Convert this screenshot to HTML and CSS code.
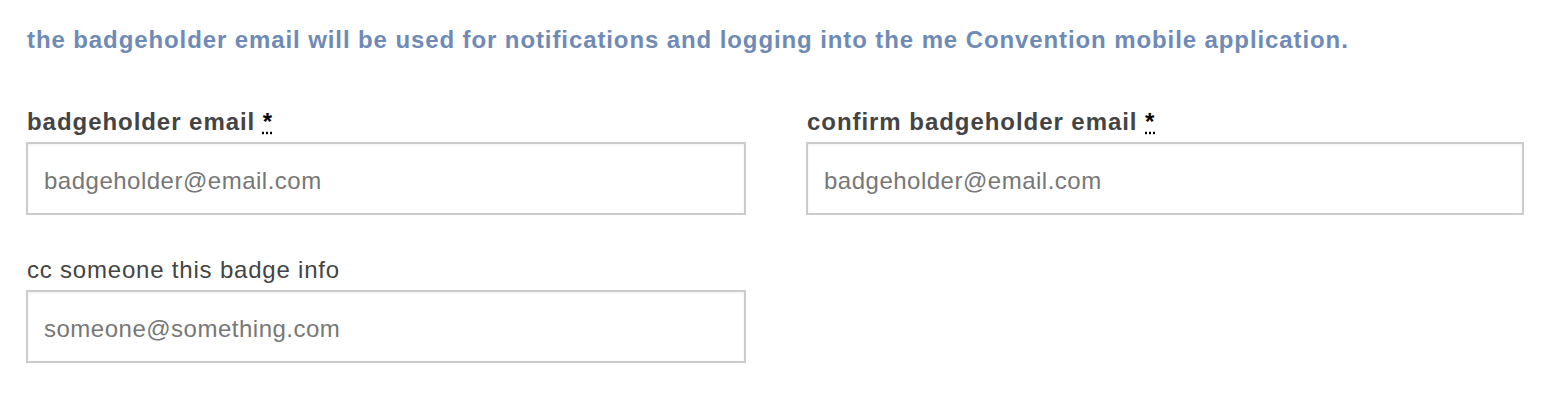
FILE: index.html
```html
<!DOCTYPE html>
<html lang="en">
<head>
    <meta charset="UTF-8">
    <meta name="viewport" content="width=device-width, initial-scale=1.0">
    <title>Badgeholder</title>
    <link rel="stylesheet" href="styles.css">
</head>
<body>
    <div class="form">
        <p class="intro">the badgeholder email will be used for notifications and logging into the me Convention mobile application.</p>
        <div class="row">
            <div class="field">
                <label class="required" for="email">badgeholder email <abbr title="required">*</abbr></label>
                <input type="email" id="email" placeholder="badgeholder@email.com">
            </div>
            <div class="field">
                <label class="required" for="confirmEmail">confirm badgeholder email <abbr title="required">*</abbr></label>
                <input type="email" id="confirmEmail" placeholder="badgeholder@email.com">
            </div>
        </div>
        <div class="row">
            <div class="field">
                <label for="ccEmail">cc someone this badge info</label>
                <input type="email" id="ccEmail" placeholder="someone@something.com">
            </div>
            <div class="field"></div>
        </div>
    </div>
</body>
</html>
```

FILE: styles.css
```css
body {
    font-family: 'Liberation Sans', Arial, sans-serif;
    background: #ffffff;
    margin: 0;
    padding: 0;
}

.form {
    padding: 26px 28px 0 26px;
    width: 1498px;
}

.intro {
    margin: 0 0 54px 1px;
    font-size: 24px;
    letter-spacing: 0.9px;
    font-weight: bold;
    color: #6f8bb5;
    line-height: 28px;
}

.row {
    display: grid;
    grid-template-columns: 720px 718px;
    gap: 60px;
    margin-bottom: 41px;
}

.field label {
    display: block;
    font-size: 24px;
    letter-spacing: 0.8px;
    color: #444444;
    line-height: 28px;
    margin: 0 0 6px 1px;
}

.field label.required {
    font-weight: bold;
    letter-spacing: 0.95px;
}

abbr {
    color: #000000;
    text-decoration: underline dotted;
}

input {
    box-sizing: border-box;
    width: 100%;
    height: 73px;
    border: 2px solid #cccccc;
    box-shadow: inset 0 1px 3px rgba(0, 0, 0, 0.06);
    padding: 4px 16px 0;
    font-family: inherit;
    font-size: 24px;
    letter-spacing: 0.5px;
    color: #444444;
    outline: none;
}

input::placeholder {
    color: #777777;
}
```
